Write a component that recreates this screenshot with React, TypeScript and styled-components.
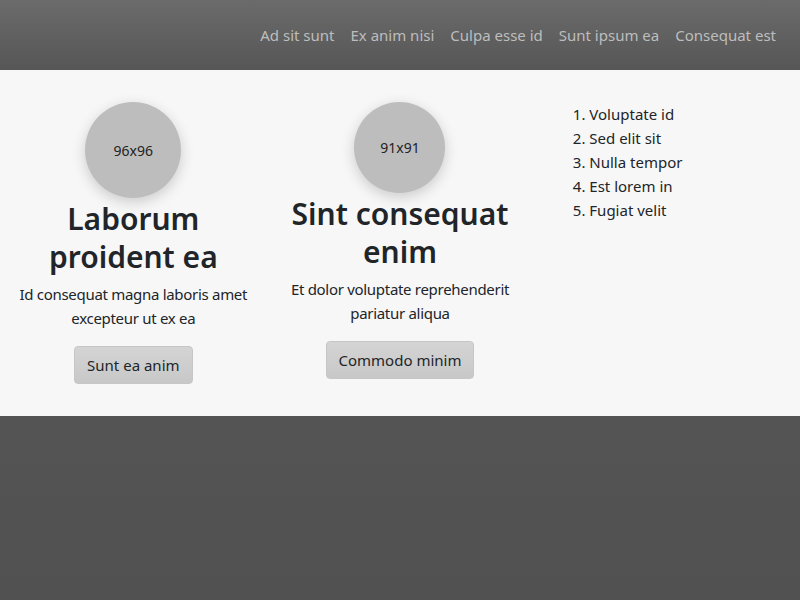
import React from "react";
import styled, { createGlobalStyle } from "styled-components";

const Global = createGlobalStyle`
  html, body { margin: 0; padding: 0; }
  body {
    font-family: "Noto Sans", "Open Sans", sans-serif;
    color: #212529;
    background: linear-gradient(#5a5a5a, #515151);
    min-height: 600px;
  }
`;

const Page = styled.div`
  min-height: 600px;
  background: linear-gradient(#5b5b5b, #515151);
`;

const Header = styled.header`
  height: 70px;
  display: flex;
  align-items: center;
  justify-content: flex-end;
  padding: 0 24px;
  background: linear-gradient(#6b6b6b, #565656);
`;

const Nav = styled.nav`
  display: flex;
  gap: 16px;
`;

const NavLink = styled.a`
  color: #bdbdbd;
  font-size: 15px;
  text-decoration: none;
`;

const Main = styled.main`
  background: #f7f7f7;
  display: grid;
  grid-template-columns: repeat(3, 1fr);
  align-items: start;
  padding: 16px 0;
`;

const Column = styled.section`
  padding: 16px;
  display: flex;
  flex-direction: column;
  align-items: center;
  text-align: center;
`;

const Avatar = styled.div<{ $size: number }>`
  width: ${(p) => p.$size}px;
  height: ${(p) => p.$size}px;
  border-radius: 50%;
  background: #bdbdbd;
  box-shadow: 0 4px 14px rgba(0, 0, 0, 0.18);
  display: flex;
  align-items: center;
  justify-content: center;
  font-size: 14px;
  color: #222;
`;

const Title = styled.h2`
  font-size: 30px;
  font-weight: 600;
  line-height: 38px;
  margin: 2px 0 6px;
`;

const Text = styled.p`
  font-size: 15px;
  line-height: 24px;
  letter-spacing: -0.02em;
  margin: 0 0 16px;
`;

const Button = styled.button`
  font-family: inherit;
  font-size: 15px;
  color: #212529;
  background: linear-gradient(#d4d4d4, #c8c8c8);
  border: 1px solid #c6c6c6;
  border-radius: 4px;
  padding: 6px 12px;
  line-height: 24px;
`;

const List = styled.ol`
  margin: 0;
  padding-left: 40px;
  align-self: stretch;
  text-align: left;
  font-size: 15px;
  line-height: 24px;
`;

const ListColumn = styled(Column)`
  align-items: stretch;
`;

const navItems = ["Ad sit sunt", "Ex anim nisi", "Culpa esse id", "Sunt ipsum ea", "Consequat est"];
const listItems = ["Voluptate id", "Sed elit sit", "Nulla tempor", "Est lorem in", "Fugiat velit"];

export default function App() {
  return (
    <>
      <Global />
      <Page>
        <Header>
          <Nav>
            {navItems.map((n) => (
              <NavLink key={n} href="#">{n}</NavLink>
            ))}
          </Nav>
        </Header>
        <Main>
          <Column>
            <Avatar $size={96}>96x96</Avatar>
            <Title>Laborum proident ea</Title>
            <Text>Id consequat magna laboris amet excepteur ut ex ea</Text>
            <Button>Sunt ea anim</Button>
          </Column>
          <Column>
            <Avatar $size={91}>91x91</Avatar>
            <Title>Sint consequat enim</Title>
            <Text>Et dolor voluptate reprehenderit pariatur aliqua</Text>
            <Button>Commodo minim</Button>
          </Column>
          <ListColumn>
            <List>
              {listItems.map((l) => (
                <li key={l}>{l}</li>
              ))}
            </List>
          </ListColumn>
        </Main>
      </Page>
    </>
  );
}
